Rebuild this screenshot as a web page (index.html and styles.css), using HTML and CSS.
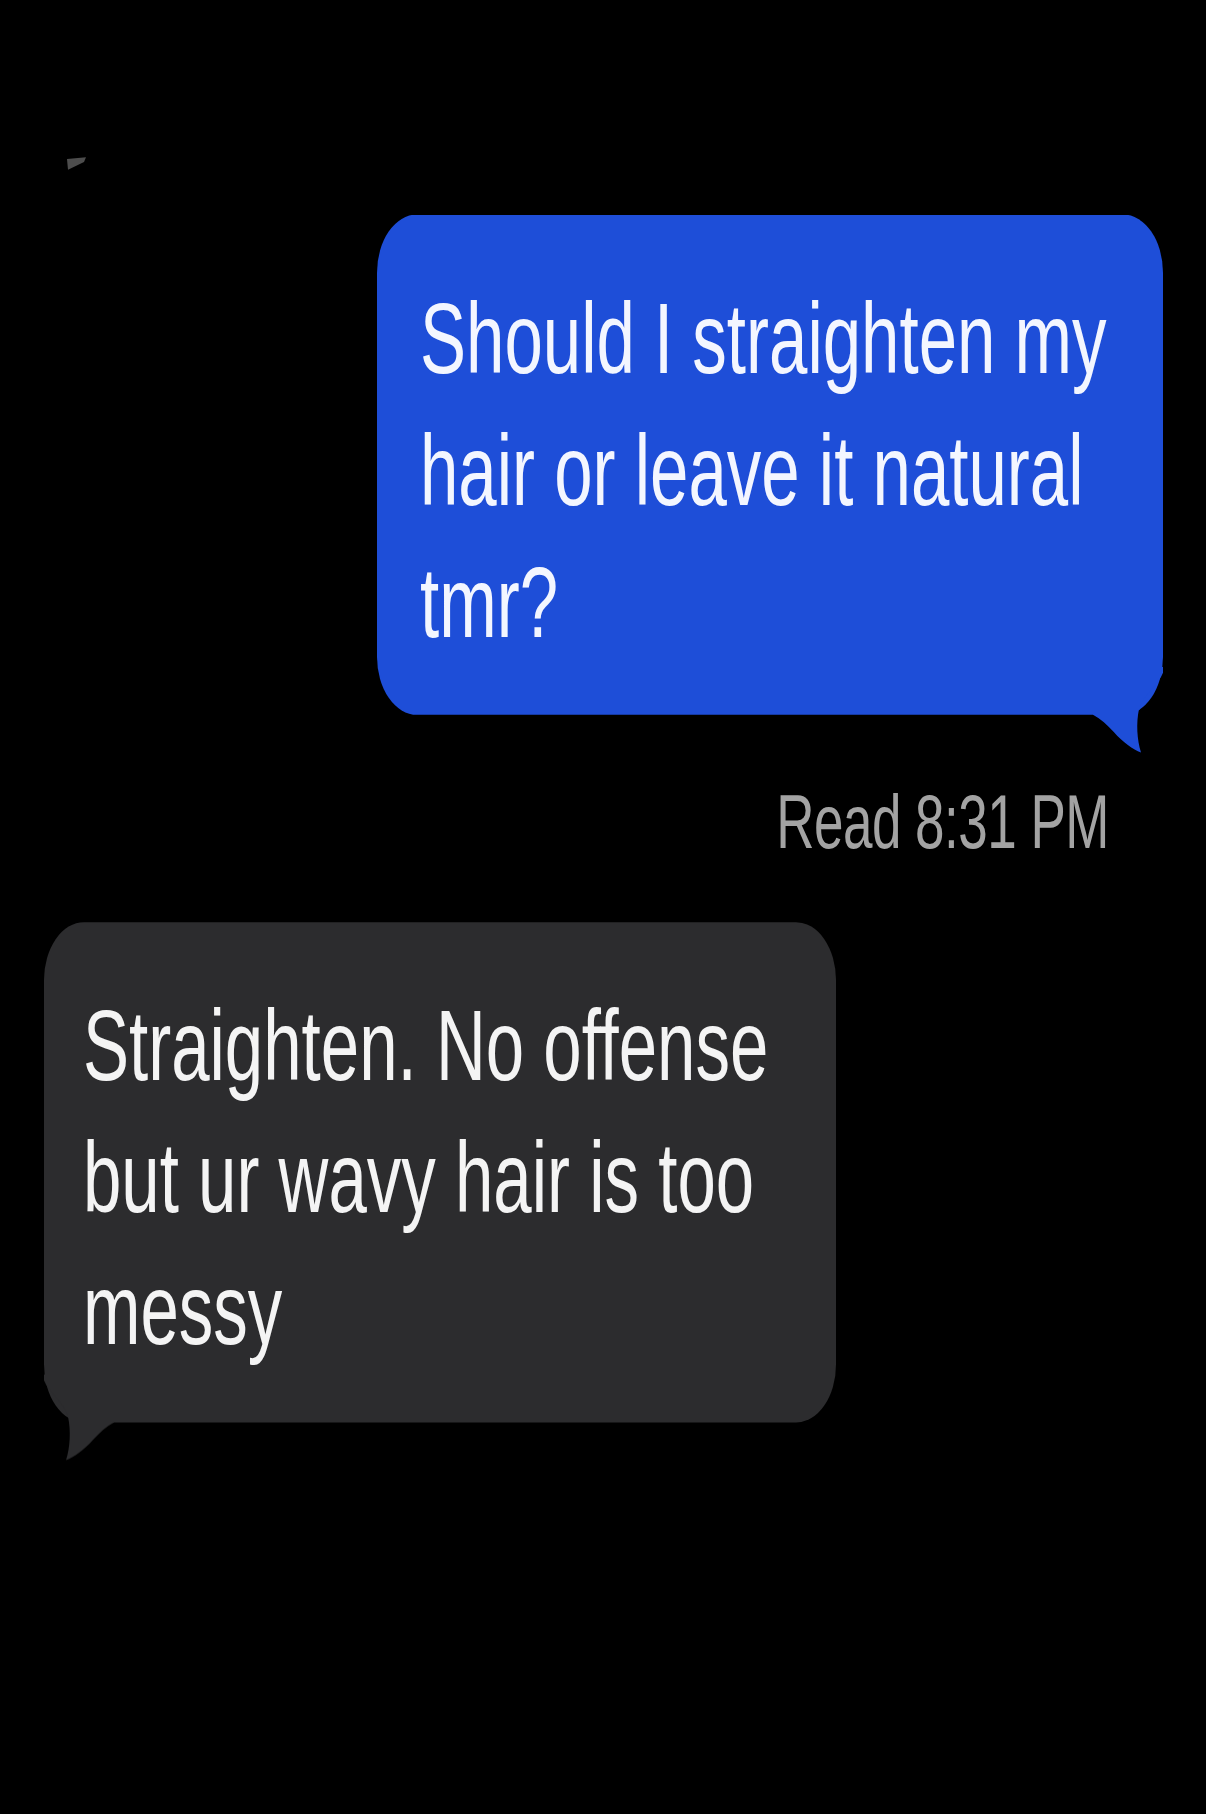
FILE: index.html
```html
<!DOCTYPE html>
<html lang="en">
<head>
    <meta charset="UTF-8">
    <meta name="viewport" content="width=device-width, initial-scale=1.0">
    <title>Messages</title>
    <link rel="stylesheet" href="styles.css">
</head>
<body>
    <div class="screen">
        <!-- what is left of the top bar -->
        <div class="top-bar">
            <svg class="mark" width="22" height="10" viewBox="0 0 22 10">
                <polygon points="1,1.6 20,0.4 18,3.8 2,9"></polygon>
            </svg>
        </div>

        <div class="bubble sent">
            Should I straighten my hair or leave it natural tmr?
            <svg class="tail" viewBox="0 0 70 60" preserveAspectRatio="none">
                <path d="M0 0 L70 0 L70 4 C66 12 50 19 46 29 C43 39 44 50 48 59 C40 57 30 52 21 45 C14 40 8 36 0 33 Z"></path>
            </svg>
        </div>

        <p class="receipt">Read 8:31 PM</p>

        <div class="bubble received">
            Straighten. No offense but ur wavy hair is too messy
            <svg class="tail" viewBox="0 0 70 60" preserveAspectRatio="none">
                <path d="M0 0 L70 0 L70 4 C66 12 50 19 46 29 C43 39 44 50 48 59 C40 57 30 52 21 45 C14 40 8 36 0 33 Z"></path>
            </svg>
        </div>
    </div>
</body>
</html>
```

FILE: styles.css
```css
html {
    background-color: #000;
}
body {
    margin: 0;
    min-height: 1814px;
    background-color: #000;
    font-family: "Liberation Sans", Arial, sans-serif;
}

/* the screenshot is stretched tall, so the whole thread is too */
.screen {
    width: 1206px;
    height: 1251px;
    display: flex;
    flex-direction: column;
    transform: scaleY(1.45);
    transform-origin: 0 0;
}

.top-bar {
    box-sizing: border-box;
    height: 148px;
    padding: 108px 0 0 66px;
}
.mark {
    display: block;
}
.mark polygon {
    fill: #4d4d4d;
}

.bubble {
    position: relative;
    box-sizing: border-box;
    font-size: 69px;
    line-height: 91px;
    border-radius: 40px;
}
.sent {
    align-self: flex-end;
    margin-right: 43px;
    width: 786px;
    padding: 40px 53px 32px 43px;
    background-color: #1e4ed8;
    color: #f3f6ff;
}
.received {
    align-self: flex-start;
    margin: 43px 0 0 44px;
    width: 792px;
    padding: 40px 63px 32px 39px;
    background-color: #2c2c2e;
    color: #f4f4f4;
}

.tail {
    position: absolute;
    bottom: -27px;
    width: 70px;
    height: 60px;
}
.sent .tail {
    right: 0;
}
.sent .tail path {
    fill: #1e4ed8;
}
.received .tail {
    left: 0;
    transform: scaleX(-1);
}
.received .tail path {
    fill: #2c2c2e;
}

.receipt {
    align-self: flex-end;
    margin: 47px 97px 0 0;
    font-size: 53px;
    line-height: 53px;
    letter-spacing: -0.5px;
    color: #a3a3a3;
}
```
